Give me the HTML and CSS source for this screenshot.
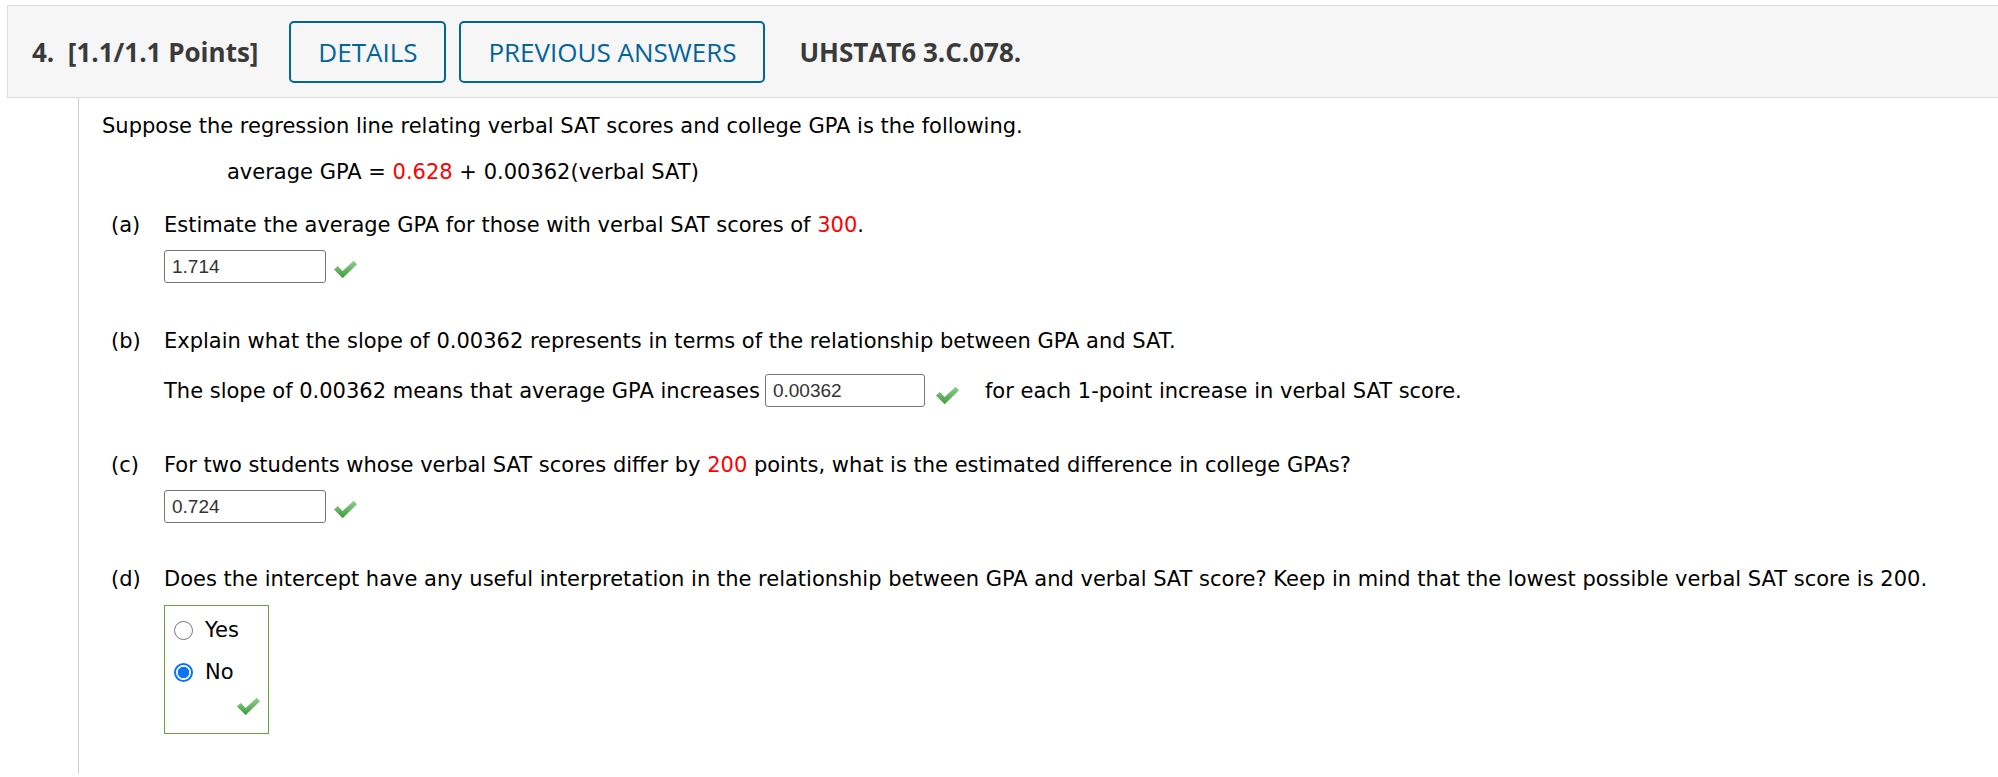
FILE: index.html
```html
<!DOCTYPE html>
<html>
<head>
<meta charset="utf-8">
<link rel="stylesheet" href="styles.css">
</head>
<body>
<div class="header">
  <span class="qnum">4.&nbsp;&nbsp;[1.1/1.1 Points]</span>
  <span class="btn btn-details">DETAILS</span>
  <span class="btn btn-prev">PREVIOUS ANSWERS</span>
  <span class="qid">UHSTAT6 3.C.078.</span>
</div>
<div class="content">
  <p class="intro">Suppose the regression line relating verbal SAT scores and college GPA is the following.</p>
  <p class="formula">average GPA = <span class="red">0.628</span> + 0.00362(verbal SAT)</p>

  <div class="part part-a">
    <span class="plabel">(a)</span>
    <div class="pbody">
      <div class="ptext">Estimate the average GPA for those with verbal SAT scores of <span class="red">300</span>.</div>
      <div class="answer"><span class="inp">1.714</span><svg class="check" viewBox="0 0 26 20"><defs><linearGradient id="g1" x1="0" y1="0" x2="0" y2="1"><stop offset="0" stop-color="#8fd08a"/><stop offset="1" stop-color="#3f9a3f"/></linearGradient></defs><path d="M1 10.5 L5 7 L10 12 L21.5 1.5 L25 5 L10 19.5 Z" fill="url(#g1)"/></svg></div>
    </div>
  </div>

  <div class="part part-b">
    <span class="plabel">(b)</span>
    <div class="pbody">
      <div class="ptext">Explain what the slope of 0.00362 represents in terms of the relationship between GPA and SAT.</div>
      <div class="slope-row">The slope of 0.00362 means that average GPA increases <span class="inp inp-wide">0.00362</span><svg class="check check-b" viewBox="0 0 26 20"><defs><linearGradient id="g2" x1="0" y1="0" x2="0" y2="1"><stop offset="0" stop-color="#8fd08a"/><stop offset="1" stop-color="#3f9a3f"/></linearGradient></defs><path d="M1 10.5 L5 7 L10 12 L21.5 1.5 L25 5 L10 19.5 Z" fill="url(#g2)"/></svg><span class="after">for each 1-point increase in verbal SAT score.</span></div>
    </div>
  </div>

  <div class="part part-c">
    <span class="plabel">(c)</span>
    <div class="pbody">
      <div class="ptext">For two students whose verbal SAT scores differ by <span class="red">200</span> points, what is the estimated difference in college GPAs?</div>
      <div class="answer"><span class="inp">0.724</span><svg class="check" viewBox="0 0 26 20"><defs><linearGradient id="g3" x1="0" y1="0" x2="0" y2="1"><stop offset="0" stop-color="#8fd08a"/><stop offset="1" stop-color="#3f9a3f"/></linearGradient></defs><path d="M1 10.5 L5 7 L10 12 L21.5 1.5 L25 5 L10 19.5 Z" fill="url(#g3)"/></svg></div>
    </div>
  </div>

  <div class="part part-d">
    <span class="plabel">(d)</span>
    <div class="pbody">
      <div class="ptext">Does the intercept have any useful interpretation in the relationship between GPA and verbal SAT score? Keep in mind that the lowest possible verbal SAT score is 200.</div>
      <div class="choices">
        <div class="choice"><span class="radio"></span><span>Yes</span></div>
        <div class="choice"><span class="radio radio-on"></span><span>No</span></div>
        <div class="choice-check"><svg class="check" viewBox="0 0 26 20"><defs><linearGradient id="g4" x1="0" y1="0" x2="0" y2="1"><stop offset="0" stop-color="#8fd08a"/><stop offset="1" stop-color="#3f9a3f"/></linearGradient></defs><path d="M1 10.5 L5 7 L10 12 L21.5 1.5 L25 5 L10 19.5 Z" fill="url(#g4)"/></svg></div>
      </div>
    </div>
  </div>
</div>
</body>
</html>
```

FILE: styles.css
```css
html, body {
  margin: 0;
  padding: 0;
  background: #ffffff;
}
body {
  font-family: "DejaVu Sans", Verdana, sans-serif;
  font-size: 21px;
  color: #000;
}
.header {
  margin: 5px 0 0 7px;
  height: 91px;
  border: 1px solid #dddddd;
  border-right: none;
  background: #f6f6f6;
  display: flex;
  align-items: center;
  padding-left: 24px;
  font-family: "Open Sans", sans-serif;
}
.qnum {
  font-weight: 700;
  font-size: 26px;
  color: #3a3a3a;
}
.btn {
  box-sizing: border-box;
  height: 62px;
  border: 2.5px solid #03649c;
  border-radius: 5px;
  color: #03649c;
  font-size: 26px;
  display: flex;
  align-items: center;
  justify-content: center;
}
.btn-details {
  width: 157px;
  margin-left: 31px;
}
.btn-prev {
  width: 306px;
  margin-left: 13px;
}
.qid {
  margin-left: 34px;
  font-weight: 700;
  font-size: 26px;
  color: #3a3a3a;
}
.content {
  margin-left: 78px;
  border-left: 1px solid #d0d0d0;
  padding: 16px 0 40px 23px;
  min-height: 620px;
  box-sizing: border-box;
}
p {
  margin: 0;
  line-height: 24px;
}
.formula {
  margin-top: 22px;
  padding-left: 125px;
}
.red {
  color: #ff0000;
}
.part {
  display: flex;
  padding-left: 9px;
  line-height: 24px;
}
.plabel {
  width: 53px;
  flex: none;
}
.part-a { margin-top: 29px; }
.part-b { margin-top: 46px; }
.part-c { margin-top: 46px; }
.part-d { margin-top: 44px; }
.answer {
  margin-top: 13px;
  display: flex;
  align-items: flex-end;
}
.inp {
  box-sizing: border-box;
  display: inline-block;
  width: 162px;
  height: 33px;
  border: 1px solid #767676;
  border-radius: 3px;
  font-family: "Liberation Sans", Arial, sans-serif;
  font-size: 19px;
  line-height: 31px;
  padding-left: 7px;
  color: #333;
  vertical-align: middle;
}
.inp-wide {
  width: 160px;
}
.check {
  width: 25px;
  height: 20px;
  margin-left: 7px;
  margin-bottom: 4px;
  flex: none;
}
.slope-row {
  margin-top: 21px;
  display: flex;
  align-items: center;
  white-space: nowrap;
}
.slope-row .inp {
  margin-left: 5px;
}
.check-b {
  margin-left: 10px;
  margin-bottom: 0;
  margin-top: 9px;
}
.after {
  margin-left: 25px;
}
.choices {
  margin-top: 14px;
  box-sizing: border-box;
  width: 105px;
  height: 129px;
  border: 1.5px solid #6aa13c;
  padding: 12px 0 0 7px;
}
.choice {
  display: flex;
  align-items: center;
  height: 24px;
  margin-bottom: 18px;
}
.radio {
  box-sizing: border-box;
  width: 19px;
  height: 19px;
  border-radius: 50%;
  border: 1.5px solid #767676;
  background: #fff;
  margin-right: 12px;
  margin-left: 2px;
}
.radio-on {
  border: 2px solid #0b75f5;
  background: radial-gradient(circle, #0b75f5 0 5.5px, #fff 6px);
}
.choice-check {
  display: flex;
  justify-content: flex-end;
  padding-right: 7px;
  margin-top: -6px;
}
.choice-check .check {
  margin: 0;
}
```
